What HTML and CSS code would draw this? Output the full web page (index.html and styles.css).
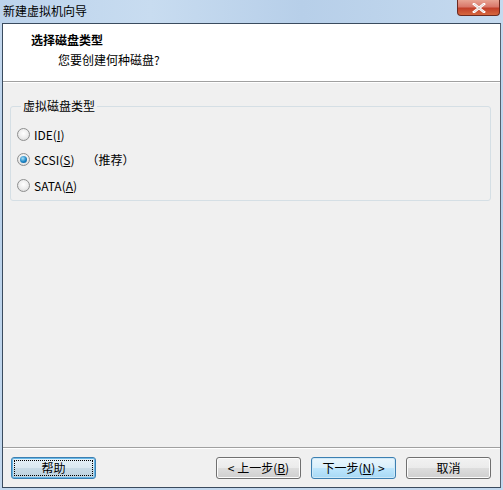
FILE: index.html
```html
<!DOCTYPE html>
<html>
<head>
<meta charset="utf-8">
<link rel="stylesheet" href="styles.css">
</head>
<body>
<div class="window">
  <div class="titlebar">
    <span class="title">新建虚拟机向导</span>
    <div class="close"><svg width="14" height="10" viewBox="0 0 14 10"><path d="M2 1 L12 9 M12 1 L2 9" stroke="#ffffff" stroke-width="2.6" stroke-linecap="square"/><path d="M2 1 L12 9 M12 1 L2 9" stroke="#6b2a20" stroke-width="0.6" fill="none" opacity="0.4"/></svg></div>
  </div>
  <div class="client">
    <div class="header">
      <div class="h-title">选择磁盘类型</div>
      <div class="h-sub">您要创建何种磁盘?</div>
    </div>
    <div class="body">
      <fieldset class="group">
        <legend>虚拟磁盘类型</legend>
        <div class="opt"><span class="radio"></span><span>IDE(<u>I</u>)</span></div>
        <div class="opt"><span class="radio on"><span class="dot"></span></span><span>SCSI(<u>S</u>)</span><span class="rec">（推荐）</span></div>
        <div class="opt"><span class="radio"></span><span>SATA(<u>A</u>)</span></div>
      </fieldset>
    </div>
    <div class="footer">
      <button class="btn focus"><span class="fr">帮助</span></button>
      <div class="spacer"></div>
      <button class="btn">&lt; 上一步(<u>B</u>)</button>
      <button class="btn def">下一步(<u>N</u>) &gt;</button>
      <button class="btn">取消</button>
    </div>
  </div>
</div>
</body>
</html>
```

FILE: styles.css
```css
html, body {
  margin: 0;
  padding: 0;
}
body {
  width: 503px;
  height: 490px;
  overflow: hidden;
  font-family: "Noto Sans CJK SC", "Noto Sans", sans-serif;
  font-size: 12px;
  color: #000;
}
.window {
  width: 503px;
  height: 490px;
  background: linear-gradient(180deg, #c5d9ef 0%, #b9d1ea 40%, #c3d8ee 100%);
  display: flex;
  flex-direction: column;
}
.titlebar {
  height: 23px;
  display: flex;
  justify-content: space-between;
  align-items: flex-start;
  background: linear-gradient(90deg, #bcd3ec 0%, #c8dcf0 30%, #b7cfe9 60%, #c5daef 100%);
}
.title {
  padding-left: 3px;
  line-height: 22px;
  font-size: 12px;
  color: #000;
}
.close {
  width: 43px;
  height: 16px;
  margin-right: 3px;
  border: 1px solid #6b2a20;
  border-top: none;
  border-radius: 0 0 4px 4px;
  background: linear-gradient(180deg, #e8a493 0%, #d9786a 45%, #c2402a 55%, #d6683f 100%);
  display: flex;
  align-items: center;
  justify-content: center;
  box-sizing: border-box;
}
.client {
  margin: 0 2px 0 2px;
  height: 465px;
  border: 1px solid #3a4b5e;
  border-right-color: #52606e;
  background: #f0f0f0;
  display: flex;
  flex-direction: column;
  box-sizing: border-box;
  width: 499px;
}
.header {
  background: #fff;
  border-bottom: 1px solid #a0a0a0;
  box-shadow: 0 1px 0 #ffffff;
  box-sizing: border-box;
  height: 58px;
  padding-top: 7px;
}
.h-title {
  font-weight: bold;
  padding-left: 28px;
  line-height: 17px;
}
.h-sub {
  padding-left: 55px;
  line-height: 17px;
  margin-top: 3px;
}
.body {
  flex: 1;
  padding: 17px 9px 0 7px;
}
.group {
  margin: 0;
  border: 1px solid #d5dfe5;
  border-radius: 3px;
  padding: 9px 0 0 6px;
  height: 102px;
  box-sizing: border-box;
}
.group legend {
  padding: 0 2px;
  margin-left: 4px;
  line-height: 14px;
}
.opt {
  display: flex;
  align-items: center;
  height: 25px;
  gap: 4px;
  line-height: 16px;
}
.opt:nth-child(4) { height: 27px; }
.radio {
  width: 13px;
  height: 13px;
  border-radius: 50%;
  border: 1px solid #8e8f8f;
  background: radial-gradient(circle at 50% 40%, #ffffff 0%, #eeeeee 50%, #d2d2d2 100%);
  box-sizing: border-box;
  display: flex;
  align-items: center;
  justify-content: center;
}
.radio .dot {
  width: 7px;
  height: 7px;
  border-radius: 50%;
  background: radial-gradient(circle at 40% 35%, #a6e0f8 0%, #1a84c4 55%, #0d4d86 100%);
}
.rec {
  margin-left: 8px;
}
.footer {
  height: 40px;
  border-top: 1px solid #a0a0a0;
  box-shadow: inset 0 1px 0 #ffffff;
  display: flex;
  align-items: flex-start;
  padding: 9px 9px 0 8px;
  box-sizing: border-box;
  gap: 10px;
}
.spacer { flex: 1; }
.btn {
  font-family: inherit;
  font-size: 12px;
  width: 85px;
  height: 22px;
  padding: 0;
  border: 1px solid #707070;
  border-radius: 3px;
  background: linear-gradient(180deg, #f2f2f2 0%, #ebebeb 48%, #dddddd 52%, #cfcfcf 100%);
  box-shadow: inset 0 0 0 1px #fcfcfc;
  color: #000;
  line-height: 18px;
  display: flex;
  align-items: center;
  justify-content: center;
}
.btn.def {
  border-color: #3c7fb1;
  background: linear-gradient(180deg, #eaf6fd 0%, #d9f0fc 48%, #bee6fd 52%, #a7d9f5 100%);
  box-shadow: inset 0 0 0 1px #cfe9f8;
}
.btn.focus {
  border-color: #3c7fb1;
  background: linear-gradient(180deg, #e5f1f8 0%, #dbe9f1 48%, #c8dbe6 52%, #bdd2df 100%);
  box-shadow: inset 0 0 0 1px #66b6e6;
}
.btn.focus .fr {
  width: 79px;
  height: 16px;
  border: 1px dotted #000;
  box-sizing: border-box;
  display: flex;
  align-items: center;
  justify-content: center;
}
```
